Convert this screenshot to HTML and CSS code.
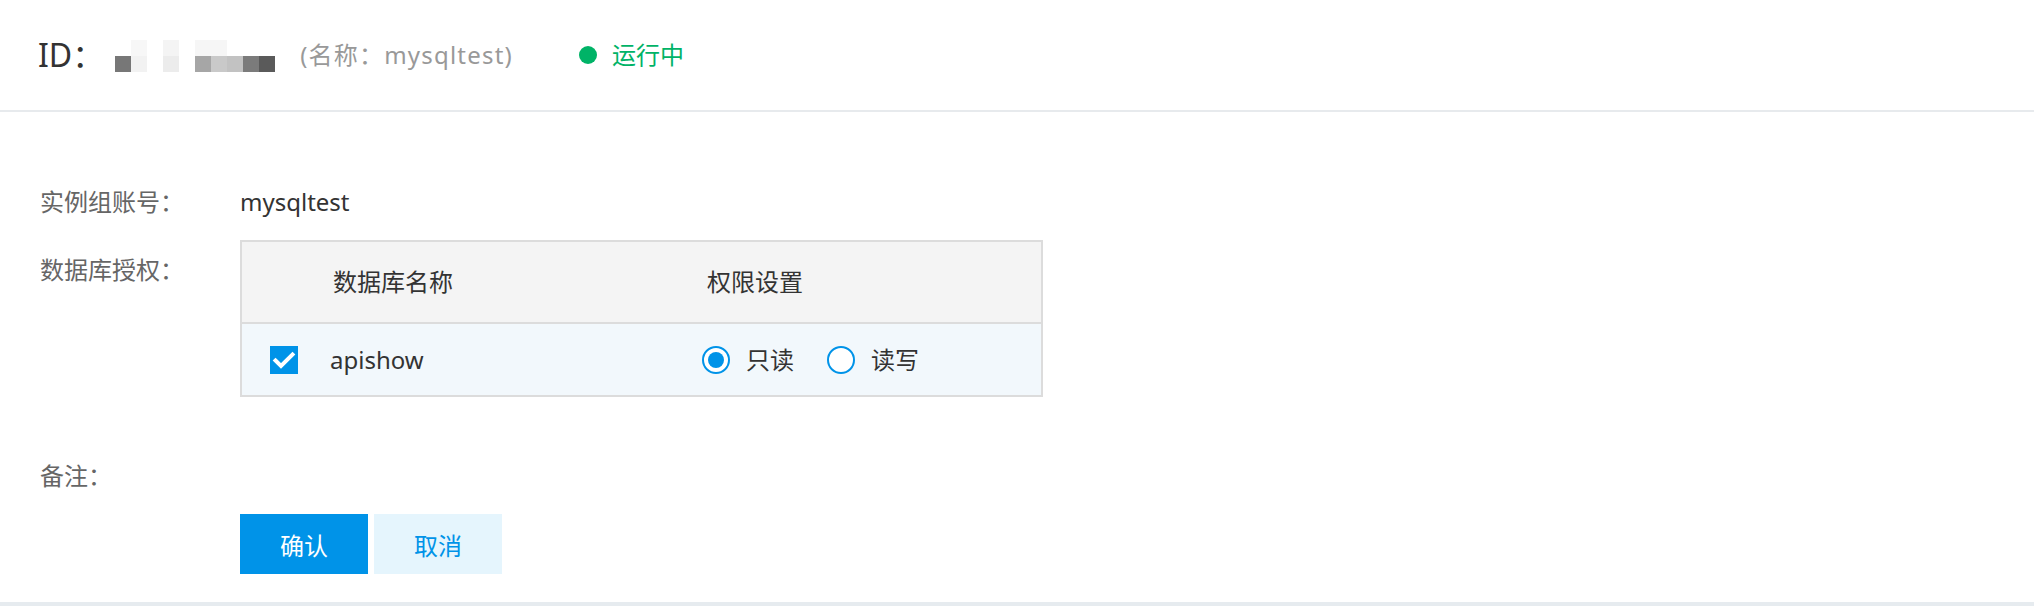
FILE: index.html
```html
<!DOCTYPE html>
<html lang="zh-CN">
<head>
<meta charset="utf-8">
<title>实例组账号授权</title>
<link rel="stylesheet" href="styles.css">
</head>
<body>
<div class="page">
  <header class="top">
    <span class="id-label">ID：</span>
    <div class="mosaic">
      <span class="m0"></span><span class="m-f7"></span><span class="m0"></span><span class="m-f4"></span><span class="m0"></span>
      <span class="m-f6"></span><span class="m-f6"></span><span class="m0"></span><span class="m0"></span><span class="m0"></span>
      <span class="m-77"></span><span class="m-f3"></span><span class="m0"></span><span class="m-ec"></span><span class="m0"></span>
      <span class="m-a6"></span><span class="m-c9"></span><span class="m-c2"></span><span class="m-7b"></span><span class="m-5a"></span>
    </div>
    <span class="inst-name">(名称：mysqltest)</span>
    <span class="status"><i class="dot"></i>运行中</span>
  </header>

  <main class="form">
    <div class="row row-account">
      <div class="lbl">实例组账号：</div>
      <div class="val">mysqltest</div>
    </div>

    <div class="row row-db">
      <div class="lbl lbl-top">数据库授权：</div>
      <div class="val">
        <div class="tbl">
          <div class="tr th">
            <div class="cell"></div>
            <div class="cell">数据库名称</div>
            <div class="cell cell-perm-head">权限设置</div>
          </div>
          <div class="tr td">
            <div class="cell cell-check">
              <span class="checkbox">
                <svg viewBox="0 0 28 28" width="28" height="28"><path d="M5.5 14.5 L11 20 L22.5 8.5" fill="none" stroke="#fff" stroke-width="4" stroke-linejoin="miter" stroke-linecap="square"/></svg>
              </span>
            </div>
            <div class="cell cell-name">apishow</div>
            <div class="cell perms">
              <label class="opt"><span class="radio on"></span>只读</label>
              <label class="opt"><span class="radio"></span>读写</label>
            </div>
          </div>
        </div>
      </div>
    </div>

    <div class="row row-note">
      <div class="lbl">备注：</div>
      <div class="val"></div>
    </div>

    <div class="row row-actions">
      <div class="lbl"></div>
      <div class="val actions">
        <button class="btn btn-primary">确认</button>
        <button class="btn btn-ghost">取消</button>
      </div>
    </div>
  </main>
  <div class="band"></div>
</div>
</body>
</html>
```

FILE: styles.css
```css
* { box-sizing: border-box; }

html, body {
  margin: 0;
  padding: 0;
  background: #fff;
}

body {
  font-family: "Noto Sans", "Noto Sans CJK SC", sans-serif;
  font-size: 24px;
  line-height: 30px;
  color: #333;
}

.page {
  width: 100%;
}

/* ---------- header ---------- */
.top {
  height: 112px;
  border-bottom: 2px solid #e7eaed;
  display: flex;
  align-items: center;
  padding-left: 38px;
}

.id-label {
  font-size: 32px;
  line-height: 40px;
  color: #333;
}

.mosaic {
  display: grid;
  grid-template-columns: repeat(10, 16px);
  grid-auto-rows: 16px;
  margin-left: 11px;
  margin-top: 2px;
}
.mosaic span { display: block; }
.m0 { background: #fff; }
.m-f7 { background: #f7f7f7; }
.m-f4 { background: #f4f4f4; }
.m-f6 { background: #f6f6f6; }
.m-f3 { background: #f2f2f2; }
.m-ec { background: #ececec; }
.m-77 { background: #777; }
.m-a6 { background: #a6a6a6; }
.m-c9 { background: #c9c9c9; }
.m-c2 { background: #c2c2c2; }
.m-7b { background: #7b7b7b; }
.m-5a { background: #5a5a5a; }

.inst-name {
  margin-left: 25px;
  color: #999;
  letter-spacing: 1.2px;
}

.status {
  display: flex;
  align-items: center;
  margin-left: 66px;
  color: #00b367;
}
.dot {
  width: 18px;
  height: 18px;
  border-radius: 50%;
  background: #00b367;
  margin-right: 15px;
}

/* ---------- form ---------- */
.form {
  padding: 75px 0 28px 40px;
  display: flex;
  flex-direction: column;
}

.row {
  display: grid;
  grid-template-columns: 200px 1fr;
}
.row-db { margin-top: 23px; }
.row-note { margin-top: 64px; min-height: 30px; }
.row-actions { margin-top: 23px; }

.lbl {
  color: #666;
}
.lbl-top {
  padding-top: 15px;
}

.val {
  color: #333;
}

/* ---------- table ---------- */
.tbl {
  width: 803px;
  border: 2px solid #dcdcdc;
}
.tr {
  display: grid;
  grid-template-columns: 91px 369px 1fr;
  align-items: center;
}
.th {
  height: 82px;
  background: #f4f4f4;
  border-bottom: 2px solid #dcdcdc;
}
.cell-perm-head {
  padding-left: 5px;
}
.td {
  height: 71px;
  background: #f2f8fc;
}
.cell-name {
  margin-left: -3px;
}
.cell-check {
  padding-left: 28px;
  display: flex;
  align-items: center;
}
.checkbox {
  width: 28px;
  height: 28px;
  background: #0093e8;
  display: block;
}
.checkbox svg { display: block; }

.perms {
  display: flex;
  align-items: center;
}
.opt {
  display: flex;
  align-items: center;
  margin-right: 33px;
}
.radio {
  width: 28px;
  height: 28px;
  border: 2px solid #0093e8;
  border-radius: 50%;
  margin-right: 16px;
  display: flex;
  align-items: center;
  justify-content: center;
  background: #fff;
}
.radio.on::after {
  content: "";
  width: 16px;
  height: 16px;
  border-radius: 50%;
  background: #0093e8;
}

/* ---------- buttons ---------- */
.actions {
  display: flex;
  gap: 6px;
}
.btn {
  width: 128px;
  height: 60px;
  border: none;
  padding: 0;
  font-family: inherit;
  font-size: 24px;
  cursor: pointer;
}
.btn-primary {
  background: #0093e8;
  color: #fff;
}
.btn-ghost {
  background: #e5f5fd;
  color: #0093e8;
}

.band {
  height: 4px;
  background: #e6ebef;
}
```
